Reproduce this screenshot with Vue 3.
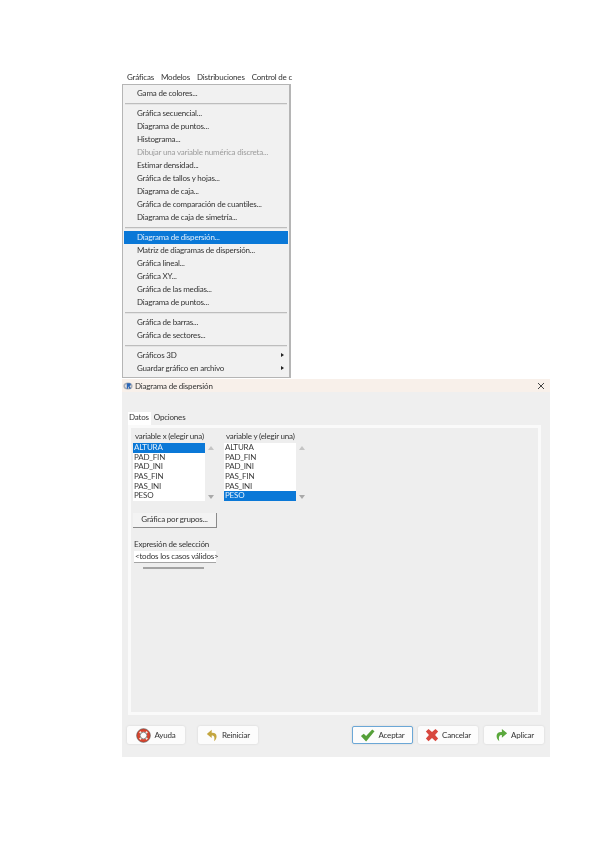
<script setup>
const menuGroups = [
  [{ label: 'Gama de colores...' }],
  [
    { label: 'Gráfica secuencial...' },
    { label: 'Diagrama de puntos...' },
    { label: 'Histograma...' },
    { label: 'Dibujar una variable numérica discreta...', disabled: true },
    { label: 'Estimar densidad...' },
    { label: 'Gráfica de tallos y hojas...' },
    { label: 'Diagrama de caja...' },
    { label: 'Gráfica de comparación de cuantiles...' },
    { label: 'Diagrama de caja de simetría...' },
  ],
  [
    { label: 'Diagrama de dispersión...', active: true },
    { label: 'Matriz de diagramas de dispersión...' },
    { label: 'Gráfica lineal...' },
    { label: 'Gráfica XY...' },
    { label: 'Gráfica de las medias...' },
    { label: 'Diagrama de puntos...' },
  ],
  [{ label: 'Gráfica de barras...' }, { label: 'Gráfica de sectores...' }],
  [
    { label: 'Gráficos 3D', sub: true },
    { label: 'Guardar gráfico en archivo', sub: true },
  ],
]

const variables = ['ALTURA', 'PAD_FIN', 'PAD_INI', 'PAS_FIN', 'PAS_INI', 'PESO']
const lists = [
  { title: 'variable x (elegir una)', selected: 'ALTURA' },
  { title: 'variable y (elegir una)', selected: 'PESO' },
]
</script>

<template>
  <div class="page">
    <div class="menubar">
      <span>Gráficas</span><span>Modelos</span><span>Distribuciones</span><span>Control de c</span>
    </div>

    <div class="menu">
      <template v-for="(group, i) in menuGroups" :key="i">
        <div v-if="i" class="sep"></div>
        <div
          v-for="item in group"
          :key="item.label"
          class="item"
          :class="{ disabled: item.disabled, active: item.active }"
        >
          {{ item.label }}
          <i v-if="item.sub" class="caret"></i>
        </div>
      </template>
    </div>

    <div class="dialog">
      <div class="titlebar">
        <svg class="r-logo" viewBox="0 0 12 12" width="10" height="10">
          <ellipse cx="6" cy="6" rx="5.5" ry="4.2" fill="#a9adb5" />
          <ellipse cx="6" cy="6" rx="3.4" ry="2.5" fill="#f3ece8" />
          <path d="M4.5 2.8h3.6c1.6 0 1.9 3-.3 3.2l1.8 3.2H7.6L6 6.2v3H4.5z" fill="#2a65b5" />
        </svg>
        <span>Diagrama de dispersión</span>
        <svg class="close" viewBox="0 0 8 8" width="8" height="8">
          <path d="M1 1l6 6M7 1L1 7" stroke="#444" stroke-width="1" fill="none" />
        </svg>
      </div>

      <div class="tabs">
        <span class="tab current">Datos</span>
        <span class="tab">Opciones</span>
      </div>

      <div class="panel">
        <div class="lists">
          <div v-for="list in lists" :key="list.title" class="list-col">
            <div class="list-title">{{ list.title }}</div>
            <div class="list-row">
              <div class="listbox">
                <div
                  v-for="v in variables"
                  :key="v"
                  class="opt"
                  :class="{ selected: v === list.selected }"
                >{{ v }}</div>
              </div>
              <div class="scroll">
                <i class="up"></i>
                <i class="down"></i>
              </div>
            </div>
          </div>
        </div>

        <div class="group-btn">Gráfica por grupos...</div>

        <div class="expr-label">Expresión de selección</div>
        <div class="expr-input">&lt;todos los casos válidos&gt;</div>
        <div class="expr-scroll"></div>
      </div>

      <div class="footer">
        <div class="btn help">
          <svg viewBox="0 0 16 16" width="15" height="15">
            <circle cx="8" cy="8" r="5.6" fill="none" stroke="#d8432c" stroke-width="3.4" />
            <path d="M4 4l2.2 2.2M12 4L9.8 6.2M4 12l2.2-2.2M12 12L9.8 9.8" stroke="#f3e6dc" stroke-width="2.2" />
            <circle cx="8" cy="8" r="7.3" fill="none" stroke="#555" stroke-width=".7" />
            <circle cx="8" cy="8" r="3.6" fill="none" stroke="#555" stroke-width=".7" />
          </svg>
          Ayuda
        </div>
        <div class="btn reset">
          <svg viewBox="0 0 16 16" width="13" height="13">
            <path d="M7 1L1 6l6 5V8c3 0 4 2 3 7 4-3 5-11-3-10.5z" fill="#c3a640" />
          </svg>
          Reiniciar
        </div>
        <div class="spacer"></div>
        <div class="btn ok">
          <svg viewBox="0 0 16 16" width="15" height="15">
            <path d="M1 8.5L4 6l2.5 2.5L13 1.5l2.5 2L6.5 14.500z" fill="#549f38" />
          </svg>
          Aceptar
        </div>
        <div class="btn cancel">
          <svg viewBox="0 0 16 16" width="14" height="14">
            <path d="M1 4l3-3 4 3.5L12 1l3 3-3.5 4 3.5 4-3 3-4-3.5L4 15l-3-3 3.5-4z" fill="#d8483f" />
          </svg>
          Cancelar
        </div>
        <div class="btn apply">
          <svg viewBox="0 0 16 16" width="14" height="14">
            <path d="M9 1l6 5-6 5V8C6 8 5 10 6 15 2 12 1 4 9 4.5z" fill="#5aa83c" />
          </svg>
          Aplicar
        </div>
      </div>
    </div>
  </div>
</template>

<style scoped>
.page {
  width: 599px;
  height: 848px;
  box-sizing: border-box;
  padding: 71px 0 0 122px;
  background: #fff;
  font-family: Lato, Roboto, sans-serif;
  font-size: 8px;
  letter-spacing: -0.2px;
  color: #333;
  overflow: hidden;
  filter: blur(0.4px);
}

.menubar {
  width: 169px;
  height: 13px;
  display: flex;
  gap: 7px;
  padding-left: 5px;
  box-sizing: border-box;
  line-height: 13px;
  white-space: nowrap;
}

.menu {
  width: 169px;
  height: 294px;
  box-sizing: border-box;
  background: #f1f1f1;
  border: 1px solid #b5b5b5;
  border-right-width: 2px;
  padding: 2px 1px;
}
.item {
  position: relative;
  height: 13px;
  line-height: 13px;
  padding-left: 13px;
  white-space: nowrap;
}
.item.disabled { color: #9c9c9c; }
.item.active {
  background: #0a78d7;
  color: #dfeefc;
}
.caret {
  position: absolute;
  right: 4px;
  top: 4px;
  border-left: 3px solid #222;
  border-top: 2.5px solid transparent;
  border-bottom: 2.5px solid transparent;
}
.sep {
  height: 2px;
  box-sizing: border-box;
  margin: 3px 1px 2px;
  border-top: 1px solid #bdbdbd;
  border-bottom: 1px solid #e4e4e4;
}

.dialog {
  width: 428px;
  height: 378px;
  margin-top: 1px;
  box-sizing: border-box;
  background: #efefef;
  display: flex;
  flex-direction: column;
}
.titlebar {
  height: 13px;
  flex: none;
  display: flex;
  align-items: center;
  gap: 2px;
  background: #f8f0ea;
  padding: 0 5px 0 1px;
  line-height: 12px;
}
.close { margin-left: auto; }

.tabs {
  display: flex;
  margin: 20px 0 0 6px;
  height: 13px;
  line-height: 11px;
}
.tab { padding: 0 3px 0 3px; }
.tab.current {
  background: #fff;
  padding: 0 2px 0 1px;
}

.panel {
  margin-left: 6px;
  width: 413px;
  height: 290px;
  box-sizing: border-box;
  flex: none;
  border: 3px solid #fafafa;
  padding: 3px 2px 0 2px;
  background: #eeeeee;
}
.lists {
  display: flex;
  gap: 7px;
}
.list-col { width: 84px; }
.list-title {
  height: 12px;
  line-height: 10px;
  padding-left: 2px;
}
.list-row {
  display: flex;
  height: 58px;
}
.listbox {
  width: 72px;
  height: 58px;
  background: #fff;
  line-height: 9.6px;
  color: #3a3a3a;
}
.opt {
  height: 9.667px;
  padding-left: 1px;
}
.opt.selected {
  background: #0a78d7;
  color: #e4f0fb;
}
.scroll {
  width: 12px;
  position: relative;
}
.up, .down {
  position: absolute;
  left: 3px;
  border-left: 3px solid transparent;
  border-right: 3px solid transparent;
}
.up { top: 3px; border-bottom: 4px solid #c4c4c4; }
.down { bottom: 2px; border-top: 4px solid #a9a9a9; }

.group-btn {
  width: 84px;
  height: 15px;
  margin-top: 12px;
  box-sizing: border-box;
  background: #f3f3f3;
  border-right: 1px solid #8a8a8a;
  border-bottom: 1px solid #8a8a8a;
  line-height: 13px;
  text-align: center;
}
.expr-label {
  margin: 12px 0 0 1px;
  height: 10px;
  line-height: 8px;
}
.expr-input {
  width: 82px;
  height: 12px;
  margin: 1px 0 0 1px;
  box-sizing: border-box;
  background: #fff;
  border-bottom: 1px solid #a5a5a5;
  line-height: 10px;
  white-space: nowrap;
  padding-left: 1px;
}
.expr-scroll {
  width: 61px;
  height: 2px;
  margin: 4px 0 0 10px;
  background: #a3a3a3;
}

.footer {
  display: flex;
  margin-top: 11px;
  padding: 0 6px 0 5px;
}
.spacer { flex: 1; }
.btn {
  width: 58px;
  height: 18px;
  box-sizing: border-box;
  background: #fcfcfc;
  border-radius: 2px;
  box-shadow: 0 0 2px #cfcfcf;
  display: flex;
  align-items: center;
  justify-content: center;
  gap: 3px;
}
.reset { width: 60px; margin-left: 13px; }
.ok {
  width: 61px;
  border: 1px solid #6ba7d6;
  gap: 3px;
}
.cancel { width: 60px; margin-left: 5px; }
.apply { width: 60px; margin-left: 6px; }
</style>
